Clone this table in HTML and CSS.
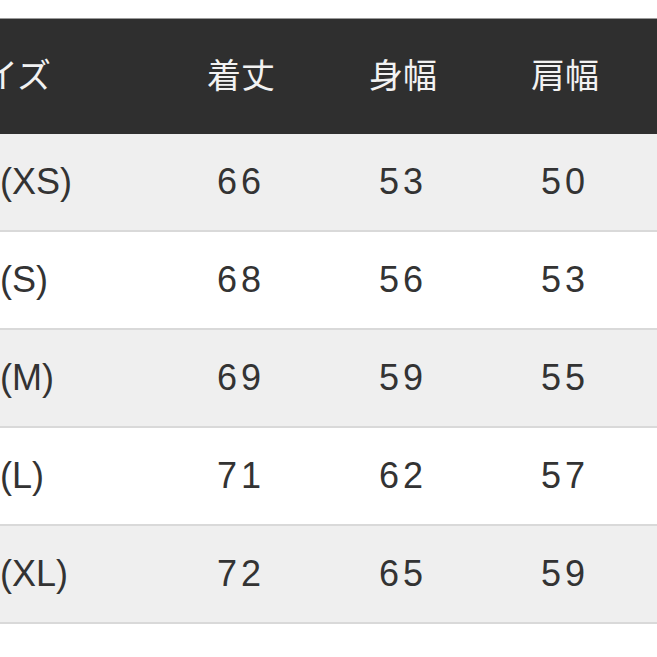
FILE: index.html
```html
<!DOCTYPE html>
<html lang="ja">
<head>
<meta charset="utf-8">
<link rel="stylesheet" href="styles.css">
</head>
<body>
<div class="page">
  <table class="size-table">
    <thead>
      <tr class="head-row">
        <th class="col-size">サイズ</th>
        <th>着丈</th>
        <th>身幅</th>
        <th class="col-last">肩幅</th>
      </tr>
    </thead>
    <tbody>
      <tr class="odd"><td class="col-size">(XS)</td><td>66</td><td>53</td><td class="col-last">50</td></tr>
      <tr class="even"><td class="col-size">(S)</td><td>68</td><td>56</td><td class="col-last">53</td></tr>
      <tr class="odd"><td class="col-size">(M)</td><td>69</td><td>59</td><td class="col-last">55</td></tr>
      <tr class="even"><td class="col-size">(L)</td><td>71</td><td>62</td><td class="col-last">57</td></tr>
      <tr class="odd"><td class="col-size">(XL)</td><td>72</td><td>65</td><td class="col-last">59</td></tr>
    </tbody>
  </table>
</div>
</body>
</html>
```

FILE: styles.css
```css
html, body {
  margin: 0;
  padding: 0;
  background: #ffffff;
  width: 657px;
  height: 657px;
  overflow: hidden;
}

.page {
  padding-top: 18px;
}

.size-table {
  border-collapse: collapse;
  table-layout: fixed;
  width: 720px;
  margin-left: -50px;
  font-family: "Liberation Sans", "Noto Sans CJK JP", sans-serif;
}

.size-table th,
.size-table td {
  padding: 0;
  text-align: center;
  width: 162px;
}

.size-table .col-size {
  width: 210px;
  text-align: left;
}

.size-table .col-last {
  width: 162px;
}

.head-row {
  background: #2f2f2f;
  border-top: 1px solid #9a9a9a;
}

.head-row th {
  height: 109px;
  padding-bottom: 6px;
  color: #f2f2f2;
  font-family: "Noto Sans CJK JP", sans-serif;
  font-weight: 400;
  font-size: 34px;
  line-height: 1;
  letter-spacing: 0;
}

.head-row th.col-last {
  padding-right: 24px;
}

tbody tr {
  border-bottom: 2px solid #d9d9d9;
}

tbody td {
  height: 96px;
  padding-left: 4px;
  color: #333333;
  font-size: 36px;
  line-height: 1;
  letter-spacing: 4px;
}

.size-table tbody td.col-last {
  padding-right: 24px;
}

.size-table tbody td.col-size {
  padding-left: 50px;
  letter-spacing: 0;
}

.odd {
  background: #efefef;
}

.even {
  background: #ffffff;
}
```
